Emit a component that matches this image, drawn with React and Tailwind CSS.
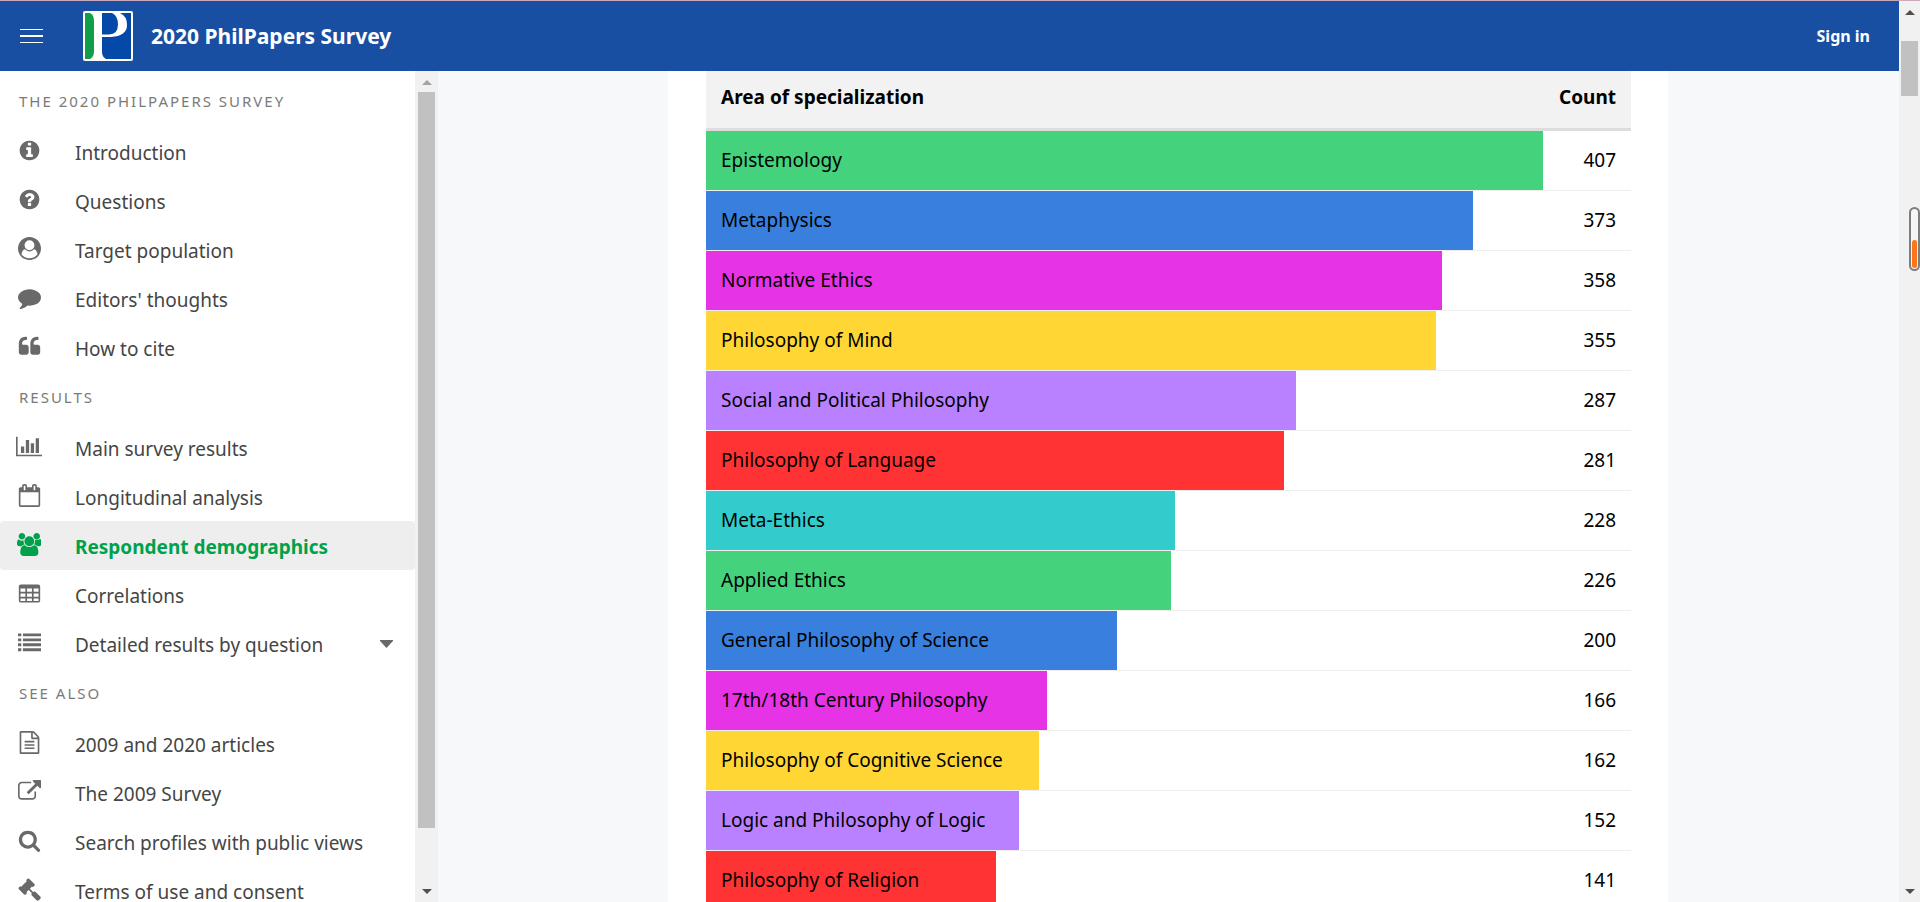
const ICONS = {
  info: { w: 1792, d: "M1152 1376v-160q0-14-9-23t-23-9h-96v-512q0-14-9-23t-23-9h-320q-14 0-23 9t-9 23v160q0 14 9 23t23 9h96v320h-96q-14 0-23 9t-9 23v160q0 14 9 23t23 9h448q14 0 23-9t9-23zm-128-896v-160q0-14-9-23t-23-9h-192q-14 0-23 9t-9 23v160q0 14 9 23t23 9h192q14 0 23-9t9-23zm640 416q0 209-103 385.5t-279.5 279.5-385.5 103-385.5-103-279.5-279.5-103-385.5 103-385.5 279.5-279.5 385.5-103 385.5 103 279.5 279.5 103 385.5z" },
  question: { w: 1792, d: "M1024 1376v-192q0-14-9-23t-23-9h-192q-14 0-23 9t-9 23v192q0 14 9 23t23 9h192q14 0 23-9t9-23zm256-672q0-88-55.5-163t-138.5-116-170-41q-243 0-371 213-15 24 8 42l132 100q7 6 19 6 16 0 25-12 53-68 86-92 34-24 86-24 48 0 85.5 26t37.5 59q0 38-20 61t-68 45q-63 28-115.5 86.5t-52.5 125.5v36q0 14 9 23t23 9h192q14 0 23-9t9-23q0-19 21.5-49.5t54.5-49.5q32-18 49-28.5t46-35 44.5-48 28-60.5 12.5-81zm384 192q0 209-103 385.5t-279.5 279.5-385.5 103-385.5-103-279.5-279.5-103-385.5 103-385.5 279.5-279.5 385.5-103 385.5 103 279.5 279.5 103 385.5z" },
  user: { w: 1792, d: "M1523 1339q-22-155-87.5-257.5t-184.5-118.5q-67 74-159.5 115.5t-195.5 41.5-195.5-41.5-159.5-115.5q-119 16-184.5 118.5t-87.5 257.5q106 150 271 237.5t356 87.5 356-87.5 271-237.5zm-243-699q0-159-112.5-271.5t-271.5-112.5-271.5 112.5-112.5 271.5 112.5 271.5 271.5 112.5 271.5-112.5 112.5-271.5zm512 256q0 182-71 347.5t-190.5 286-285.5 191.5-349 71-349-71-285.5-191.5-190.5-286-71-347.5 71-348 191-286 286-191 348-71 348 71 286 191 191 286 71 348z" },
  comment: { w: 1792, d: "M1792 896q0 174-120 321.5t-326 233-450 85.5q-70 0-145-8-198 175-460 242-49 14-114 22-17 2-30.5-9t-17.5-29v-1q-3-4-.5-12t2-10 4.5-9.5l6-9 7-8.5 8-9q7-8 31-34.5t34.5-38 31-39.5 32.5-51 27-59 26-76q-157-89-247.5-220t-90.5-281q0-130 71-248.5t191-204.5 286-136.5 348-50.5q244 0 450 85.5t326 233 120 321.5z" },
  quote: { w: 1792, d: "M832 960v384q0 80-56 136t-136 56h-384q-80 0-136-56t-56-136v-704q0-104 40.5-198.5t109.5-163.5 163.5-109.5 198.5-40.5h64q26 0 45 19t19 45v128q0 26-19 45t-45 19h-64q-106 0-181 75t-75 181v32q0 40 28 68t68 28h224q80 0 136 56t56 136zm896 0v384q0 80-56 136t-136 56h-384q-80 0-136-56t-56-136v-704q0-104 40.5-198.5t109.5-163.5 163.5-109.5 198.5-40.5h64q26 0 45 19t19 45v128q0 26-19 45t-45 19h-64q-106 0-181 75t-75 181v32q0 40 28 68t68 28h224q80 0 136 56t56 136z" },
  chart: { w: 2048, d: "M640 896v512h-256v-512h256zm384-512v1024h-256v-1024h256zm1024 1152v128h-2048v-1536h128v1408h1920zm-640-896v768h-256v-768h256zm384-384v1152h-256v-1152h256z" },
  calendar: { w: 1792, d: "M192 1664h1408v-1024h-1408v1024zm384-1216v-288q0-14-9-23t-23-9h-64q-14 0-23 9t-9 23v288q0 14 9 23t23 9h64q14 0 23-9t9-23zm768 0v-288q0-14-9-23t-23-9h-64q-14 0-23 9t-9 23v288q0 14 9 23t23 9h64q14 0 23-9t9-23zm384-64v1280q0 52-38 90t-90 38h-1408q-52 0-90-38t-38-90v-1280q0-52 38-90t90-38h128v-96q0-66 47-113t113-47h64q66 0 113 47t47 113v96h384v-96q0-66 47-113t113-47h64q66 0 113 47t47 113v96h128q52 0 90 38t38 90z" },
  users: { w: 1920, d: "M593 896q-162 5-265 128h-134q-82 0-138-40.5t-56-118.5q0-353 124-353 6 0 43.5 21t97.5 42.5 119 21.5q67 0 133-23-5 37-5 66 0 159 81 299zm1071 637q0 120-73 189.5t-194 69.5h-874q-121 0-194-69.5t-73-189.5q0-53 3.5-103.5t14-109 26.5-108.5 43-97.5 62-81 85.5-53.5 111.5-20q10 0 43 21.5t73 48 107 48 135 21.5 135-21.5 107-48 73-48 43-21.5q61 0 111.5 20t85.5 53.5 62 81 43 97.5 26.5 108.5 14 109 3.5 103.5zm-1024-1277q0 106-75 181t-181 75-181-75-75-181 75-181 181-75 181 75 75 181zm704 384q0 159-112.5 271.5t-271.5 112.5-271.5-112.5-112.5-271.5 112.5-271.5 271.5-112.5 271.5 112.5 112.5 271.5zm576 225q0 78-56 118.5t-138 40.5h-134q-103-123-265-128 81-140 81-299 0-29-5-66 66 23 133 23 59 0 119-21.5t97.5-42.5 43.5-21q124 0 124 353zm-128-609q0 106-75 181t-181 75-181-75-75-181 75-181 181-75 181 75 75 181z" },
  table: { w: 1792, d: "M224 192h1344q66 0 113 47t47 113v1088q0 66-47 113t-113 47h-1344q-66 0-113-47t-47-113v-1088q0-66 47-113t113-47zm-32 320v256h384v-256zm512 0v256h384v-256zm512 0v256h384v-256zm-1024 384v256h384v-256zm512 0v256h384v-256zm512 0v256h384v-256zm-1024 384v192h384v-192zm512 0v192h384v-192zm512 0v192h384v-192z" },
  list: { w: 1792, d: "M0 192h256v224h-256zM384 192h1408v224h-1408zM0 576h256v224h-256zM384 576h1408v224h-1408zM0 960h256v224h-256zM384 960h1408v224h-1408zM0 1344h256v224h-256zM384 1344h1408v224h-1408z" },
  file: { w: 1792, d: "M1596 380q28 28 48 76t20 88v1152q0 40-28 68t-68 28h-1344q-40 0-68-28t-28-68v-1600q0-40 28-68t68-28h896q40 0 88 20t76 48zm-444-244v376h376q-10-29-22-41l-313-313q-12-12-41-22zm384 1528v-1024h-416q-40 0-68-28t-28-68v-416h-768v1536h1280zm-1024-864q0-14 9-23t23-9h704q14 0 23 9t9 23v64q0 14-9 23t-23 9h-704q-14 0-23-9t-9-23v-64zm736 224q14 0 23 9t9 23v64q0 14-9 23t-23 9h-704q-14 0-23-9t-9-23v-64q0-14 9-23t23-9h704zm0 256q14 0 23 9t9 23v64q0 14-9 23t-23 9h-704q-14 0-23-9t-9-23v-64q0-14 9-23t23-9h704z" },
  external: { w: 1792, d: "M1408 928v320q0 119-84.5 203.5t-203.5 84.5h-832q-119 0-203.5-84.5t-84.5-203.5v-832q0-119 84.5-203.5t203.5-84.5h704q14 0 23 9t9 23v64q0 14-9 23t-23 9h-704q-66 0-113 47t-47 113v832q0 66 47 113t113 47h832q66 0 113-47t47-113v-320q0-14 9-23t23-9h64q14 0 23 9t9 23zm384-864v512q0 26-19 45t-45 19-45-19l-176-176-652 652q-10 10-23 10t-23-10l-114-114q-10-10-10-23t10-23l652-652-176-176q-19-19-19-45t19-45 45-19h512q26 0 45 19t19 45z" },
  search: { w: 1792, d: "M1216 832q0-185-131.5-316.5t-316.5-131.5-316.5 131.5-131.5 316.5 131.5 316.5 316.5 131.5 316.5-131.5 131.5-316.5zm512 832q0 52-38 90t-90 38q-54 0-90-38l-343-342q-179 124-399 124-143 0-273.5-55.5t-225-150-150-225-55.5-273.5 55.5-273.5 150-225 225-150 273.5-55.5 273.5 55.5 225 150 150 225 55.5 273.5q0 220-124 399l343 343q37 37 37 90z" },
  gavel: { w: 1792, d: "M1771 1536q0 53-37 90l-107 108q-39 37-91 37-53 0-90-37l-363-364q-38-36-38-90 0-53 43-96l-256-256-126 126q-14 14-34 14t-34-14q2 2 12.5 12t12.5 13 10 11.5 10 13.5 6 13.5 5.5 16.5 1.5 18q0 38-28 68-3 3-16.5 18t-19 20.5-18.5 16.5-22 15.5-22 9-26 4.5q-40 0-68-28l-408-408q-28-28-28-68 0-13 4.5-26t9-22 15.5-22 16.5-18.5 20.5-19 18-16.5q30-28 68-28 10 0 18 1.5t16.5 5.5 13.5 6 13.5 10 11.5 10 13 12.5 12 12.5q-14-14-14-34t14-34l348-348q14-14 34-14t34 14q-2-2-12.5-12t-12.5-13-10-11.5-10-13.5-6-13.5-5.5-16.5-1.5-18q0-38 28-68 3-3 16.5-18t19-20.5 18.5-16.5 22-15.5 22-9 26-4.5q40 0 68 28l408 408q28 28 28 68 0 13-4.5 26t-9 22-15.5 22-16.5 18.5-20.5 19-18 16.5q-30 28-68 28-10 0-18-1.5t-16.5-5.5-13.5-6-13.5-10-11.5-10-13-12.5-12-12.5q14 14 14 34t-14 34l-126 126 256 256q43-43 96-43 52 0 91 37l363 363q37 39 37 91z" },
};

const SECTIONS = [
  {
    title: "THE 2020 PHILPAPERS SURVEY",
    items: [
      { icon: "info", label: "Introduction" },
      { icon: "question", label: "Questions" },
      { icon: "user", label: "Target population" },
      { icon: "comment", label: "Editors' thoughts" },
      { icon: "quote", label: "How to cite" },
    ],
  },
  {
    title: "RESULTS",
    items: [
      { icon: "chart", label: "Main survey results" },
      { icon: "calendar", label: "Longitudinal analysis" },
      { icon: "users", label: "Respondent demographics", active: true },
      { icon: "table", label: "Correlations" },
      { icon: "list", label: "Detailed results by question", expandable: true },
    ],
  },
  {
    title: "SEE ALSO",
    items: [
      { icon: "file", label: "2009 and 2020 articles" },
      { icon: "external", label: "The 2009 Survey" },
      { icon: "search", label: "Search profiles with public views" },
      { icon: "gavel", label: "Terms of use and consent" },
    ],
  },
];

const COLORS = [
  "bg-[#45d27d]",
  "bg-[#397fdd]",
  "bg-[#e633e6]",
  "bg-[#ffd633]",
  "bg-[#b980ff]",
  "bg-[#ff3333]",
  "bg-[#33cccc]",
];

const AREAS = [
  ["Epistemology", 407],
  ["Metaphysics", 373],
  ["Normative Ethics", 358],
  ["Philosophy of Mind", 355],
  ["Social and Political Philosophy", 287],
  ["Philosophy of Language", 281],
  ["Meta-Ethics", 228],
  ["Applied Ethics", 226],
  ["General Philosophy of Science", 200],
  ["17th/18th Century Philosophy", 166],
  ["Philosophy of Cognitive Science", 162],
  ["Logic and Philosophy of Logic", 152],
  ["Philosophy of Religion", 141],
];

const MAX_COUNT = 407;

function Icon({ name }) {
  const { w, d } = ICONS[name];
  return (
    <svg viewBox={`0 0 ${w} 1792`} className="h-[23px] w-auto" fill="currentColor" fillRule="evenodd" aria-hidden="true">
      <path d={d} />
    </svg>
  );
}

function Logo() {
  return (
    <svg viewBox="0 0 50 50" className="size-[50px]" role="img" aria-label="PhilPapers">
      <rect width="50" height="50" rx="2" fill="#fff" />
      <path d="M2 2h5q4 2 4 8v30q0 6-4 8h-5z" fill="#119e49" />
      <path d="M19 2h10q6 3 6 11 0 10.500-9 10.500h-7z" fill="#0549a8" />
      <path d="M37 2h11v46h-25q-4-2-4-7v-15h9q16-1 16-12 0-9-7-12z" fill="#0549a8" />
    </svg>
  );
}

function Arrow({ down, className }) {
  return (
    <svg viewBox="0 0 10 5" className={`h-[5px] w-2.5 shrink-0 ${className}`} fill="currentColor" aria-hidden="true">
      <path d={down ? "M0 0h10l-5 5z" : "M0 5h10l-5-5z"} />
    </svg>
  );
}

function NavItem({ item }) {
  const Tag = item.expandable ? "button" : "a";
  const props = item.expandable
    ? { type: "button", "aria-expanded": false }
    : { href: "#", "aria-current": item.active ? "page" : undefined };
  return (
    <li>
      <Tag
        {...props}
        className={`flex h-[49px] w-full items-center rounded-sm pr-[22px] text-left ${
          item.active ? "bg-[#eeeeee] font-bold text-[#00a14b]" : "text-[#454545]"
        }`}
      >
        <span className={`flex w-[58px] shrink-0 justify-center pb-[2px] ${item.active ? "" : "text-[#696969]"}`}>
          <Icon name={item.icon} />
        </span>
        <span className="grow pt-[2px] pl-[17px] leading-5">{item.label}</span>
        {item.expandable && (
          <svg viewBox="0 0 13 8" className="h-2 w-[13px]" fill="#696969" aria-hidden="true">
            <path d="M0 0h13v1l-6.500 7-6.500-7z" />
          </svg>
        )}
      </Tag>
    </li>
  );
}

export default function App() {
  return (
    <div className="flex h-screen flex-col overflow-hidden border-t border-[#c9a9bb] bg-[#f7f8fa] font-['Noto_Sans',sans-serif] text-[19px] text-black">
      <div className="flex min-h-0 grow">
        <div className="flex min-w-0 grow flex-col">
          <header className="flex h-[70px] shrink-0 items-center bg-[#184fa2] pr-[29px] pl-5 text-white">
            <button type="button" aria-label="Toggle menu" className="flex w-[23px] flex-col gap-[5px]">
              <span className="h-px w-full bg-white" />
              <span className="h-[2px] w-full bg-white" />
              <span className="h-px w-full bg-white" />
            </button>
            <a href="#" className="ml-10 flex items-center gap-[18px] font-bold">
              <Logo />
              <span className="pt-[2px] text-[21px]">2020 PhilPapers Survey</span>
            </a>
            <a href="#" className="ml-auto text-base font-bold">Sign in</a>
          </header>

          <div className="flex min-h-0 grow">
            <nav aria-label="Survey" className="w-[415px] shrink-0 overflow-y-auto bg-white pt-[5px] [scrollbar-width:none]">
              {SECTIONS.map((section) => (
                <section key={section.title}>
                  <h2 className="flex h-[51px] items-center pl-[19px] text-[15px] tracking-[2px] text-[#7a7a7a]">
                    {section.title}
                  </h2>
                  <ul>
                    {section.items.map((item) => (
                      <NavItem key={item.label} item={item} />
                    ))}
                  </ul>
                </section>
              ))}
            </nav>
            <div className="flex w-[23px] shrink-0 flex-col items-center bg-[#f1f1f1] pt-[9px] pb-2" aria-hidden="true">
              <Arrow className="text-[#a3a3a3]" />
              <div className="mt-[7px] mb-[61px] w-[17px] grow bg-[#c1c1c1]" />
              <Arrow down className="text-[#505050]" />
            </div>

            <main className="min-w-0 grow overflow-y-auto pr-px [scrollbar-width:none]">
              <div className="mx-auto w-full max-w-[1000px] bg-white pr-[37px] pl-[38px]">
                <table className="w-full table-fixed border-collapse">
                  <thead>
                    <tr className="h-[58px] border-b-[3px] border-[#dddddd] bg-[#f2f2f2]">
                      <th scope="col" className="px-[15px] pb-1 text-left font-bold">Area of specialization</th>
                      <th scope="col" className="w-[88px] pr-[15px] pb-1 text-right font-bold">Count</th>
                    </tr>
                  </thead>
                  <tbody>
                    {AREAS.map(([area, count], i) => (
                      <tr key={area} className="h-[60px] border-b border-[#eeeeee]">
                        <td className="p-0">
                          <div
                            className={`flex h-[59px] items-center pl-[15px] whitespace-nowrap ${COLORS[i % COLORS.length]}`}
                            style={{ width: `${(count / MAX_COUNT) * 100}%` }}
                          >
                            {area}
                          </div>
                        </td>
                        <td className="pr-[15px] text-right">{count}</td>
                      </tr>
                    ))}
                  </tbody>
                </table>
              </div>
            </main>
          </div>
        </div>

        <div className="relative flex w-[21px] shrink-0 flex-col items-center bg-[#f1f1f1] pt-[9px] pb-2" aria-hidden="true">
          <Arrow className="text-[#505050]" />
          <div className="mt-[26px] h-[55px] w-[17px] bg-[#c1c1c1]" />
          <Arrow down className="mt-auto text-[#505050]" />
          <div className="absolute top-[206px] right-0 flex h-16 w-[11px] items-end rounded-full border-2 border-[#7d7d7d] bg-[#f5f5f5] p-px">
            <div className="h-7 w-full rounded-full bg-[#ff7519]" />
          </div>
        </div>
      </div>
    </div>
  );
}
